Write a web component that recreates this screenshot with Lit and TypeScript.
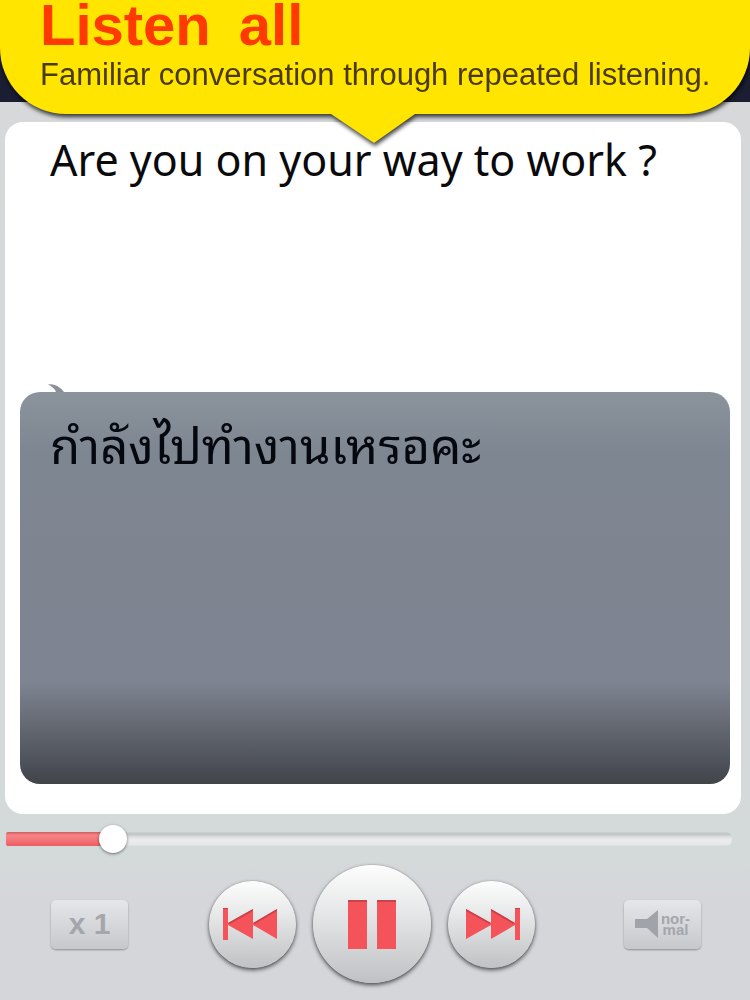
import { LitElement, html, css } from "lit";
import { customElement, state } from "lit/decorators.js";

@customElement("speech-banner")
class SpeechBanner extends LitElement {
  static styles = css`
    :host {
      display: block;
      position: relative;
      z-index: 1;
      filter: drop-shadow(1px 3px 2px rgba(0, 0, 0, 0.75));
      font-family: "Liberation Sans", Arial, sans-serif;
    }
    .bubble {
      background: #ffe500;
      border-radius: 0 0 66px 66px;
      padding: 0 24px 22px 40px;
    }
    .title {
      display: flex;
      gap: 28px;
      margin: 0 0 8px;
      font-size: 58px;
      line-height: 50px;
      font-weight: 700;
      color: #ff3a00;
    }
    .subtitle {
      margin: 0;
      font-size: 31px;
      line-height: 34px;
      color: #4a3a08;
      white-space: nowrap;
    }
    .tail {
      position: absolute;
      left: 50%;
      top: 100%;
      display: block;
      width: 84px;
      height: 30px;
      margin: -1px 0 0 -44px;
    }
  `;
  render() {
    return html`
      <header class="bubble">
        <h1 class="title"><span>Listen</span> <span>all</span></h1>
        <p class="subtitle">Familiar conversation through repeated listening.</p>
      </header>
      <svg class="tail" viewBox="0 0 84 30" aria-hidden="true">
        <path d="M0 0H84V1L43 30L0 1Z" fill="#ffe500" />
      </svg>
    `;
  }
}

@customElement("phrase-card")
class PhraseCard extends LitElement {
  static styles = css`
    :host {
      display: flex;
      flex-direction: column;
      box-sizing: border-box;
      background: #fff;
      border-radius: 18px;
      padding: 10px 11px 30px 15px;
    }
    .phrase {
      box-sizing: border-box;
      margin: 0;
      padding: 0 30px;
      font-family: "Noto Sans", sans-serif;
      font-size: 43px;
      line-height: 56px;
      color: #0a0a0c;
      flex: 260 1 0;
    }
    .translation {
      position: relative;
      flex: 392 1 0;
      border-radius: 20px;
      background: linear-gradient(
        #8b949d 0,
        #7e8691 60px,
        #7e8491 74%,
        #62676f 86%,
        #484b53 97%,
        #424448 100%
      );
    }
    .translation p {
      margin: 0;
      padding: 20px 30px;
      font-family: Thonburi, "Noto Sans Thai Looped", Loma, Garuda, Waree, "Noto Sans Thai", "Noto Sans", sans-serif;
      font-size: 49px;
      line-height: 60px;
      color: #05080f;
    }
    .curl {
      position: absolute;
      left: 28px;
      bottom: 100%;
      display: block;
      width: 16px;
      height: 8px;
    }
  `;
  render() {
    return html`
      <p class="phrase" lang="en">Are you on your way to work ?</p>
      <div class="translation">
        <svg class="curl" viewBox="0 0 16 8" aria-hidden="true">
          <path d="M0 0.5Q9 -1 16 8H8Q6 3 0 0.5Z" fill="#8b9098" />
        </svg>
        <p lang="th">กำลังไปทำงานเหรอคะ</p>
      </div>
    `;
  }
}

@customElement("app-root")
class AppRoot extends LitElement {
  @state() private position = 13.3;

  static styles = css`
    :host {
      display: flex;
      flex-direction: column;
      box-sizing: border-box;
      min-height: 100vh;
      padding-bottom: 17px;
      background: linear-gradient(#1b1e33 0 102px, #d6d8da 102px, #d4d9d9 860px, #d5d6da 900px);
      font-family: "Liberation Sans", Arial, sans-serif;
    }
    phrase-card {
      flex: 1 0 auto;
      margin: 8px 9px 0 5px;
    }
    .seek {
      appearance: none;
      display: block;
      box-sizing: border-box;
      width: auto;
      height: 28px;
      margin: 11px 18px 12px 6px;
      background: transparent;
      outline: none;
    }
    .seek::-webkit-slider-runnable-track {
      height: 14px;
      border-radius: 2px 6px 6px 2px;
      background:
        linear-gradient(#d0595e 0, #f58586 3px, #f47476 60%, #ea5c60 100%) left / calc(var(--fill) * 1%) 100% no-repeat,
        linear-gradient(#d0d3d5 0, #c0c3c5 2px, #dddfe0 5px, #ebecee 8px, #e8e9eb 12px, #dcdfe0 14px);
    }
    .seek::-webkit-slider-thumb {
      appearance: none;
      width: 28px;
      height: 28px;
      margin-top: -7px;
      border-radius: 50%;
      background: #fff;
      box-shadow: 0 1px 3px rgba(0, 0, 0, 0.5);
    }
    .controls {
      display: grid;
      grid-template-columns: 1fr auto 1fr;
      align-items: center;
      padding: 0 49px 0 51px;
    }
    .transport {
      display: flex;
      align-items: center;
      gap: 17px;
      margin: 0 9px 0 0;
    }
    button {
      font-family: inherit;
      padding: 0;
      border: 0;
      display: flex;
      align-items: center;
      justify-content: center;
    }
    .round {
      width: 87px;
      height: 87px;
      border-radius: 50%;
      background: linear-gradient(#fdfdfd, #e6e7e8 40%, #bfc1c4 100%);
      box-shadow: 0 2px 4px rgba(0, 0, 0, 0.65), 0 0 1px rgba(0, 0, 0, 0.4);
    }
    .large {
      width: 118px;
      height: 118px;
    }
    .key {
      width: 77px;
      height: 49px;
      border-radius: 5px;
      background: linear-gradient(#e5e6e9, #d8d9dc 45%, #c6c8cc);
      box-shadow: 0 1px 2px rgba(0, 0, 0, 0.35);
      color: #a3a6ac;
      font-weight: 700;
    }
    .speed {
      font-size: 30px;
      line-height: 32px;
    }
    .volume {
      justify-self: end;
      gap: 3px;
      font-size: 15px;
      line-height: 11px;
    }
    svg {
      display: block;
    }
  `;

  private seek(e: Event) {
    this.position = Number((e.target as HTMLInputElement).value);
  }

  render() {
    return html`
      <speech-banner></speech-banner>
      <phrase-card></phrase-card>
      <input
        class="seek"
        type="range"
        min="0"
        max="100"
        step="0.1"
        aria-label="Playback position"
        .value=${String(this.position)}
        style="--fill: ${this.position}"
        @input=${this.seek}
      />
      <div class="controls">
        <button class="key speed" type="button">x 1</button>
        <div class="transport">
          <button class="round" type="button" aria-label="Previous">
            <svg width="58" height="32" viewBox="0 0 58 32" fill="#f5535a">
              <path d="M0 0H5V15L30 1V15L54 1V31L30 17V31L5 17V32H0Z" />
              <path d="M0 0H5V1H0ZM30 1V3L7 16L5 15ZM54 1V3L32 16L30 15Z" fill="#c94349" />
            </svg>
          </button>
          <button class="round large" type="button" aria-label="Pause">
            <svg width="48" height="49" viewBox="0 0 48 49" fill="#f5535a">
              <path d="M0 0H19V49H0ZM29 0H48V49H29Z" />
              <path d="M0 0H19V2H0ZM29 0H48V2H29Z" fill="#c94349" />
            </svg>
          </button>
          <button class="round" type="button" aria-label="Next">
            <svg width="58" height="32" viewBox="-4 0 58 32" fill="#f5535a">
              <path d="M54 0H49V15L25 1V15L0 1V31L25 17V31L49 17V32H54Z" />
              <path d="M54 0H49V1H54ZM25 1V3L47 16L49 15ZM0 1V3L23 16L25 15Z" fill="#c94349" />
            </svg>
          </button>
        </div>
        <button class="key volume" type="button">
          <svg width="23" height="28" viewBox="0 0 23 28" aria-hidden="true">
            <path d="M0 9H12L23 0V28L12 18H0Z" fill="#a0a4aa" />
          </svg>
          <span>nor-<br />mal</span>
        </button>
      </div>
    `;
  }
}
